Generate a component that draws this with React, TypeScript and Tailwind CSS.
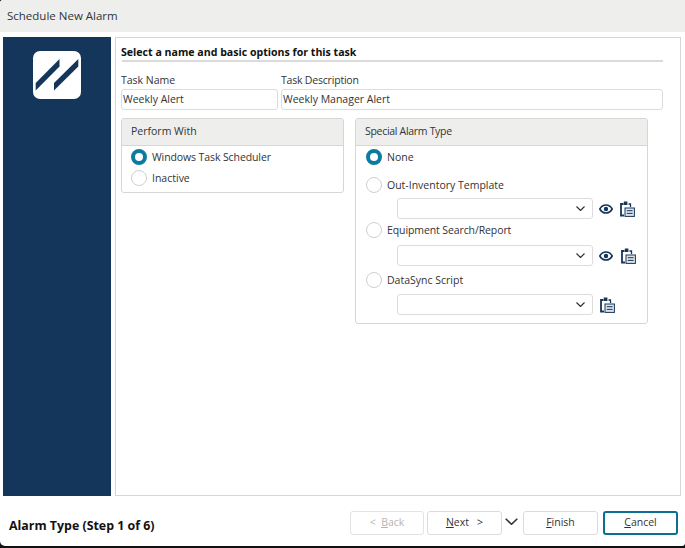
import React from 'react';

const navy = '#14365a';

const Radio: React.FC<{ checked?: boolean; label: string; className?: string; labelClass?: string }> = ({ checked, label, className, labelClass }) => (
    <div className={`flex items-center gap-[5px] ${className ?? ''}`}>
        {checked ? (
            <span className="block w-4 h-4 rounded-full border-[4px] border-[#0b7b9f] bg-white" />
        ) : (
            <span className="block w-4 h-4 rounded-full border border-[#cfcfcf] bg-white" />
        )}
        <span className={`text-[10.5px] leading-4 text-[#333] ${labelClass ?? ''}`}>{label}</span>
    </div>
);

const EyeIcon = () => (
    <svg width="14" height="10" viewBox="0 0 14 10" fill="none">
        <path d="M0.8 5C2.3 2.3 4.5 1 7 1s4.7 1.3 6.2 4C11.7 7.7 9.5 9 7 9S2.3 7.7 0.8 5Z" stroke={navy} strokeWidth="1.6" />
        <circle cx="7" cy="5" r="2.2" fill={navy} />
    </svg>
);

const ClipboardIcon = () => (
    <svg width="15" height="16" viewBox="0 0 15 16" fill="none">
        <path d="M3.5 3H1v11.5h3" stroke={navy} strokeWidth="1.8" />
        <path d="M8.5 3h2v3" stroke={navy} strokeWidth="1.3" />
        <rect x="3.8" y="0.5" width="3.6" height="3.5" fill={navy} />
        <rect x="5" y="7" width="9.4" height="8.4" fill="#dfe3e6" stroke={navy} strokeWidth="1" />
        <path d="M6.8 9.7h5.8M6.8 12.4h5.8" stroke={navy} strokeWidth="1" />
    </svg>
);

const ChevronDown: React.FC<{ w?: number; h?: number; sw?: number }> = ({ w = 9, h = 5, sw = 1.2 }) => (
    <svg width={w} height={h} viewBox="0 0 9 5" fill="none" preserveAspectRatio="none">
        <path d="M0.5 0.5 4.5 4.5 8.5 0.5" stroke="#333" strokeWidth={sw} />
    </svg>
);

const Combo = () => (
    <div className="w-[196px] h-[21px] flex items-center justify-end pr-[7px] bg-white border border-[#dcdcdc] rounded-[3px]">
        <ChevronDown />
    </div>
);

const Button: React.FC<{ className?: string; children: React.ReactNode }> = ({ className, children }) => (
    <button className={`h-[24px] flex items-center justify-center bg-white rounded-[3px] text-[10.5px] ${className ?? ''}`}>
        {children}
    </button>
);

export default function App() {
    return (
        <div className="w-[685px] h-[548px] bg-[#111] overflow-hidden font-['Open_Sans',sans-serif]">
            <div className="h-[546px] bg-white rounded-tl-[3px] rounded-bl-[5px] rounded-br-[3px] flex flex-col">
                <div className="h-[32px] shrink-0 bg-[#eeefed] rounded-tl-[3px] flex items-center pl-[7px] text-[11.5px] text-[#333]">
                    Schedule New Alarm
                </div>

                <div className="h-[459px] mt-[5px] shrink-0 flex pl-[3px] pr-[4px]">
                    <div className="w-[108px] shrink-0 bg-[#14365a] flex justify-center pt-[14px]">
                        <div className="w-[48px] h-[48px] bg-white rounded-[7px]">
                            <svg width="48" height="48" viewBox="0 0 48 48">
                                <path d="M2.7 32 26.5 8V15.5L2.7 39.5Z" fill={navy} />
                                <path d="M21 32 45.3 8V15.5L21 39.5Z" fill={navy} />
                            </svg>
                        </div>
                    </div>

                    <div className="flex-1 ml-[4px] border border-[#d6d6d6] pl-[5px] pr-[17px]">
                        <div className="h-[24px] flex items-end border-b-2 border-[#dadada] ml-[1px] leading-4">
                            <span className="ml-[-1px] text-[10.6px] font-bold text-[#111]">Select a name and basic options for this task</span>
                        </div>

                        <div className="flex gap-[3px] mt-[11px]">
                            <div className="w-[157px]">
                                <div className="text-[10.5px] leading-[15px] text-[#333]">Task Name</div>
                                <div className="h-[21px] mt-[1px] flex items-center pl-[1px] border border-[#dcdcdc] rounded-[3px] text-[10.5px] text-[#333]">Weekly Alert</div>
                            </div>
                            <div className="flex-1">
                                <div className="text-[10.5px] tracking-[-0.2px] leading-[15px] text-[#333]">Task Description</div>
                                <div className="h-[21px] mt-[1px] flex items-center pl-[1px] border border-[#dcdcdc] rounded-[3px] text-[10.5px] text-[#333]">Weekly Manager Alert</div>
                            </div>
                        </div>

                        <div className="flex items-start gap-[11px] mt-[8px]">
                            <div className="w-[223px] h-[75px] border border-[#d6d6d6] rounded-[3px] overflow-hidden">
                                <div className="h-[27px] bg-[#eeefed] border-b border-[#d6d6d6] flex items-center pl-[9px] text-[10.5px] text-[#333]">Perform With</div>
                                <div className="pl-[9px] pt-[3px] flex flex-col gap-[5px]">
                                    <Radio checked label="Windows Task Scheduler" labelClass="tracking-[-0.1px]" />
                                    <Radio label="Inactive" />
                                </div>
                            </div>

                            <div className="w-[293px] h-[206px] border border-[#d6d6d6] rounded-[3px] overflow-hidden">
                                <div className="h-[27px] bg-[#eeefed] border-b border-[#d6d6d6] flex items-center pl-[9px] text-[10.5px] tracking-[-0.3px] text-[#333]">Special Alarm Type</div>
                                <div className="pl-[10px] pt-[3px]">
                                    <Radio checked label="None" />
                                    <Radio label="Out-Inventory Template" className="mt-[12px]" />
                                    <div className="flex items-center mt-[5px] ml-[31px]">
                                        <Combo />
                                        <span className="ml-[6px] flex"><EyeIcon /></span>
                                        <span className="ml-[7px] flex"><ClipboardIcon /></span>
                                    </div>
                                    <Radio label="Equipment Search/Report" className="mt-[3px]" labelClass="tracking-[-0.1px]" />
                                    <div className="flex items-center mt-[7px] ml-[31px]">
                                        <Combo />
                                        <span className="ml-[6px] flex"><EyeIcon /></span>
                                        <span className="ml-[8px] flex"><ClipboardIcon /></span>
                                    </div>
                                    <Radio label="DataSync Script" className="mt-[6px]" />
                                    <div className="flex items-center mt-[6px] ml-[31px]">
                                        <Combo />
                                        <span className="ml-[7px] flex"><ClipboardIcon /></span>
                                    </div>
                                </div>
                            </div>
                        </div>
                    </div>
                </div>

                <div className="flex-1 flex items-center pl-[9px] pr-[7px] pt-[4px]">
                    <div className="mt-[6px] text-[12.4px] font-bold text-[#111]">Alarm Type (Step 1 of 6)</div>
                    <div className="ml-auto flex items-center">
                        <Button className="w-[74px] border border-[#e3e3e3] text-[#b5b5b5]">&lt;&nbsp;&nbsp;<u>B</u>ack</Button>
                        <Button className="w-[75px] ml-[3px] border border-[#dcdcdc] text-[#333]"><u>N</u>ext&nbsp;&nbsp;&nbsp;&gt;</Button>
                        <span className="ml-[3px] mr-[5px] mb-[4px] flex"><ChevronDown w={13} h={7} sw={1.1} /></span>
                        <Button className="w-[75px] border border-[#dcdcdc] text-[#333]"><u>F</u>inish</Button>
                        <Button className="w-[75px] ml-[5px] border-2 border-[#0b6f94] text-[#333]"><u>C</u>ancel</Button>
                    </div>
                </div>
            </div>
        </div>
    );
}
